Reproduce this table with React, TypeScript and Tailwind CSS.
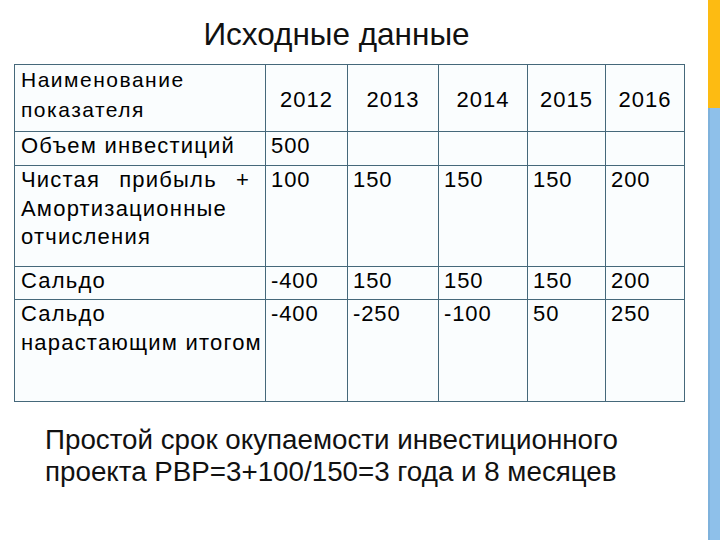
const years = ["2012", "2013", "2014", "2015", "2016"];

const rows: { label: React.ReactNode; values: string[]; h: string }[] = [
  { label: "Объем инвестиций", values: ["500", "", "", "", ""], h: "h-[34px]" },
  {
    label: (
      <>
        <span className="flex w-[229px] justify-between">
          <span>Чистая</span>
          <span>прибыль</span>
          <span>+</span>
        </span>
        <span className="block">Амортизационные</span>
        <span className="block">отчисления</span>
      </>
    ),
    values: ["100", "150", "150", "150", "200"],
    h: "h-[101px]",
  },
  { label: "Сальдо", values: ["-400", "150", "150", "150", "200"], h: "h-[33px]" },
  {
    label: (
      <>
        <span className="block">Сальдо</span>
        <span className="block whitespace-nowrap">нарастающим итогом</span>
      </>
    ),
    values: ["-400", "-250", "-100", "50", "250"],
    h: "h-[102px]",
  },
];

export default function App() {
  return (
    <div className="flex h-[540px] w-[720px] overflow-hidden bg-white font-['Liberation_Sans',Arial,sans-serif] text-black">
      <main className="flex-1">
        <h1 className="mt-[18px] w-[673px] text-center text-[31.5px] leading-[32px] font-normal text-[#111]">
          Исходные данные
        </h1>

        <table className="mt-[14px] ml-[14px] w-[670px] table-fixed border-collapse bg-[#fafdfe]">
          <colgroup>
            <col className="w-[251px]" />
            <col className="w-[82px]" />
            <col className="w-[91px]" />
            <col className="w-[89px]" />
            <col className="w-[78px]" />
            <col className="w-[79px]" />
          </colgroup>
          <thead>
            <tr className="h-[67px]">
              <th className="border border-[#45687a] px-[6px] pt-0 text-left align-top text-[21px] leading-[30px] font-normal tracking-[1.5px]">
                Наименование показателя
              </th>
              {years.map((y) => (
                <th
                  key={y}
                  className="border border-[#45687a] pt-[21px] text-center align-top text-[22px] leading-[28px] font-normal tracking-[1px]"
                >
                  {y}
                </th>
              ))}
            </tr>
          </thead>
          <tbody>
            {rows.map((r, i) => (
              <tr key={i} className={r.h}>
                <td className="border border-[#45687a] pl-[6px] pr-0 pt-0 align-top text-[22px] leading-[28.5px] tracking-[1.2px]">
                  {r.label}
                </td>
                {r.values.map((v, j) => (
                  <td
                    key={j}
                    className="border border-[#45687a] pl-[5px] pt-0 align-top text-[22px] leading-[28.5px] tracking-[0.9px]"
                  >
                    {v}
                  </td>
                ))}
              </tr>
            ))}
          </tbody>
        </table>

        <p className="mt-[22px] pl-[45px] text-[27.75px] leading-[32px] text-[#111]">
          Простой срок окупаемости инвестиционного
          <br />
          проекта PBP=3+100/150=3 года и 8 месяцев
        </p>
      </main>

      <aside className="flex w-[12px] flex-col">
        <div className="h-[108px] bg-[#fdbb12]" />
        <div className="flex-1 border-l-2 border-[#7fb2dc] bg-[#8ec0ea]" />
      </aside>
    </div>
  );
}
